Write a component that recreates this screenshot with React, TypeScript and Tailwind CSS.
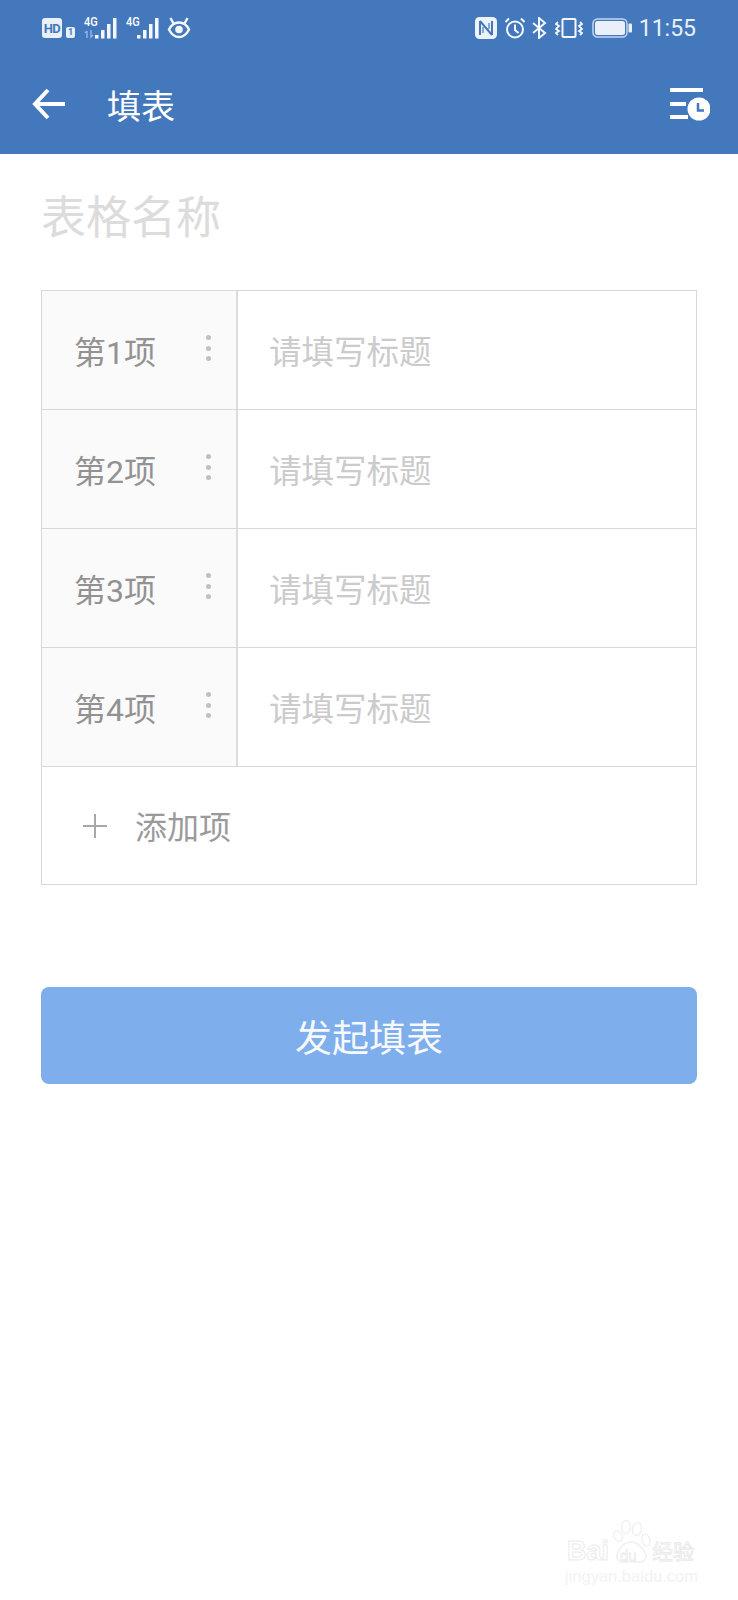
const cjk = "font-['Roboto','Noto_Sans_CJK_SC',sans-serif]";

function Bars({ arrows }: { arrows?: boolean }) {
  return (
    <span className="relative block h-[22px] w-[33px] shrink-0">
      <span className="absolute left-0 top-[-1px] origin-top-left scale-y-110 font-['Roboto',sans-serif] text-[11px] font-medium leading-[12px] text-white">4G</span>
      {arrows && (
        <svg className="absolute left-0 top-[13px]" width="11" height="9" viewBox="0 0 11 9">
          <path d="M3 1v7M1 3l2-2M7 0v7l2-2" stroke="#8fb3e6" strokeWidth="1.500" fill="none" />
        </svg>
      )}
      <svg className="absolute right-0 top-0" width="22" height="22" viewBox="0 0 22 22" fill="#f4f7fc">
        <rect x="0" y="18" width="3.500" height="3.500" />
        <rect x="6" y="13" width="3.500" height="8.500" />
        <rect x="12" y="7" width="3.500" height="14.500" />
        <rect x="18" y="1" width="3.500" height="20.500" />
      </svg>
    </span>
  );
}

function StatusBar() {
  return (
    <div className="flex h-[56px] items-center justify-between pl-[42px] pr-[42px]">
      <div className="flex items-center">
        <span className="flex h-[20px] w-[20px] items-center justify-center rounded-[3px] bg-[#e9f0fa] font-['Roboto',sans-serif] text-[13px] font-bold leading-none tracking-[-0.5px] text-[#4478bd]">HD</span>
        <span className="ml-[4px] mt-[8px] flex h-[11px] w-[9px] items-center justify-center rounded-[2px] bg-[#e9f0fa] font-['Roboto',sans-serif] text-[9px] font-bold leading-none text-[#4478bd]">1</span>
        <span className="ml-[9px]"><Bars arrows /></span>
        <span className="ml-[9px]"><Bars /></span>
        <svg className="ml-[8px]" width="24" height="22" viewBox="0 0 24 22" fill="none" stroke="#f4f7fc" strokeWidth="2.400">
          <path d="M2 12.500c2.500-5 6-7 10-7s7.500 2 10 7c-2.500 5-6 7.500-10 7.500s-7.500-2.500-10-7.500z" />
          <circle cx="12" cy="12.500" r="3.800" fill="#f4f7fc" stroke="none" />
          <path d="M3.500 1l3 5.500M20.500 1l-3 5.500" />
        </svg>
      </div>
      <div className="flex items-center">
        <svg width="22" height="22" viewBox="0 0 22 22">
          <rect x="0" y="0" width="22" height="22" rx="4.500" fill="#eef3fb" />
          <path d="M5 4v14M17 4v14M5 4l12 14" stroke="#4478bd" strokeWidth="2" fill="none" />
          <path d="M8 10v6M14 6v6" stroke="#4478bd" strokeWidth="1.200" fill="none" />
        </svg>
        <svg className="ml-[7px]" width="22" height="22" viewBox="0 0 22 22" fill="none" stroke="#f4f7fc" strokeWidth="2">
          <circle cx="11" cy="12.500" r="8" />
          <path d="M11 7.500v5.500l3.500 3M1.500 5L5 1.500M20.500 5L17 1.500" />
        </svg>
        <svg className="ml-[6px]" width="15" height="22" viewBox="0 0 15 22" fill="none" stroke="#f4f7fc" strokeWidth="2">
          <path d="M1 6l12 10-6 5V1l6 5L1 16" />
        </svg>
        <svg className="ml-[8px]" width="28" height="22" viewBox="0 0 28 22" fill="none" stroke="#f4f7fc" strokeWidth="2">
          <rect x="7.500" y="2" width="13" height="18" rx="1" />
          <path d="M3 5L1 7l3 2-3 3 3 2-3 2 2 2M25 5l2 2-3 2 3 3-3 2 3 2-2 2" strokeWidth="1.800" />
        </svg>
        <svg className="ml-[9px]" width="40" height="20" viewBox="0 0 40 20">
          <rect x="1" y="1" width="34" height="18" rx="4.500" fill="none" stroke="#c4d6ef" strokeWidth="1.500" />
          <rect x="3" y="3" width="30" height="14" rx="2.500" fill="#e9f0fa" />
          <rect x="36.500" y="5.500" width="3.500" height="9" rx="1" fill="#e9f0fa" />
        </svg>
        <span className="ml-[7px] font-['Roboto',sans-serif] text-[23px] leading-none text-[#e9f0fa]">11:55</span>
      </div>
    </div>
  );
}

function TopBar() {
  return (
    <div className="flex h-[98px] items-center justify-between pl-[32px] pr-[28px] pb-[2px]">
      <div className="flex items-center">
        <svg width="34" height="32" viewBox="0 0 34 32" fill="none" stroke="#fff" strokeWidth="4">
          <path d="M33 16H4M16 2L3 16l13 14" />
        </svg>
        <span className={`ml-[41px] mt-[6px] text-[34px] leading-none text-white ${cjk}`}>填表</span>
      </div>
      <svg width="40" height="33" viewBox="0 0 40 33">
        <rect x="0" y="0" width="33" height="4" fill="#fff" />
        <rect x="0" y="14" width="16" height="4" fill="#fff" />
        <rect x="0" y="27" width="18" height="4" fill="#fff" />
        <circle cx="29" cy="21" r="11.500" fill="#fff" />
        <path d="M28 15v7.500h6" stroke="#4478bd" strokeWidth="2.500" fill="none" />
      </svg>
    </div>
  );
}

function Row({ n }: { n: number }) {
  return (
    <div className="flex h-[119px] border-b border-[#d8d8d8]">
      <div className="relative flex w-[196px] items-center border-r-2 border-[#dcdcdc] bg-[#fafafa] pl-[32px]">
        <span className={`mt-[6px] text-[32px] leading-none text-[#929292] ${cjk}`}>{`第${n}项`}</span>
        <span className="absolute left-[164px] top-[44px] flex flex-col gap-[5.500px]">
          <span className="block h-[5px] w-[5px] rounded-full bg-[#c0c0c0]" />
          <span className="block h-[5px] w-[5px] rounded-full bg-[#c0c0c0]" />
          <span className="block h-[5px] w-[5px] rounded-full bg-[#c0c0c0]" />
        </span>
      </div>
      <div className={`flex flex-1 items-center pl-[31px] pt-[6px] text-[32.500px] leading-none text-[#cbcbcb] ${cjk}`}>请填写标题</div>
    </div>
  );
}

function Watermark() {
  return (
    <div className="absolute left-[565px] top-[1518px] h-[68px] w-[136px]">
      <svg className="absolute left-[46px] top-[2px]" width="44" height="44" viewBox="0 0 44 44" fill="none" stroke="#efefef" strokeWidth="1.300">
        <ellipse cx="7" cy="16" rx="4" ry="5.500" transform="rotate(-25 7 16)" />
        <ellipse cx="15" cy="7" rx="4.500" ry="6.500" />
        <ellipse cx="26" cy="9" rx="4.500" ry="6.500" transform="rotate(10 26 9)" />
        <ellipse cx="35" cy="20" rx="4" ry="6" transform="rotate(-15 35 20)" />
        <path d="M7 32c3-6 8-10 13-10s10 4 14 10c3 5 0 10-6 10H12c-5 0-8-5-5-10z" />
      </svg>
      <span className="absolute left-[2px] top-[20px] font-['Liberation_Sans',sans-serif] text-[27px] font-bold leading-none text-transparent [-webkit-text-stroke:1px_#ececec]">Bai</span>
      <span className="absolute left-[55px] top-[30px] font-['Liberation_Sans',sans-serif] text-[15px] leading-none text-transparent [-webkit-text-stroke:0.800px_#ececec]">du</span>
      <span className={`absolute left-[87px] top-[24px] text-[21px] leading-none text-transparent [-webkit-text-stroke:0.800px_#e8e8e8] ${cjk}`}>经验</span>
      <span className="absolute left-0 top-[50px] font-['Liberation_Sans',sans-serif] text-[16.500px] leading-none text-[#f3f3f3]">jingyan.baidu.com</span>
    </div>
  );
}

export default function App() {
  return (
    <div className="relative h-[1600px] w-[738px] overflow-hidden bg-white">
      <div className="h-[154px] bg-[#4478bd]">
        <StatusBar />
        <TopBar />
      </div>
      <div className="px-[41px]">
        <div className={`pt-[39px] text-[45px] leading-[52px] text-[#dcdcdc] ${cjk}`}>表格名称</div>
        <div className="mt-[45px] border border-[#d8d8d8]">
          <Row n={1} />
          <Row n={2} />
          <Row n={3} />
          <Row n={4} />
          <div className="flex h-[117px] items-center pl-[41px]">
            <svg width="24" height="24" viewBox="0 0 24 24" stroke="#a8a8a8" strokeWidth="2">
              <path d="M12 0v24M0 12h24" />
            </svg>
            <span className={`ml-[28px] mt-[5px] text-[32px] leading-none text-[#9a9a9a] ${cjk}`}>添加项</span>
          </div>
        </div>
        <button className={`mt-[102px] flex h-[97px] w-full items-center justify-center rounded-[8px] bg-[#7eaeec] pt-[8px] text-[37px] leading-none text-[#f6f9fe] ${cjk}`}>发起填表</button>
      </div>
      <Watermark />
    </div>
  );
}
